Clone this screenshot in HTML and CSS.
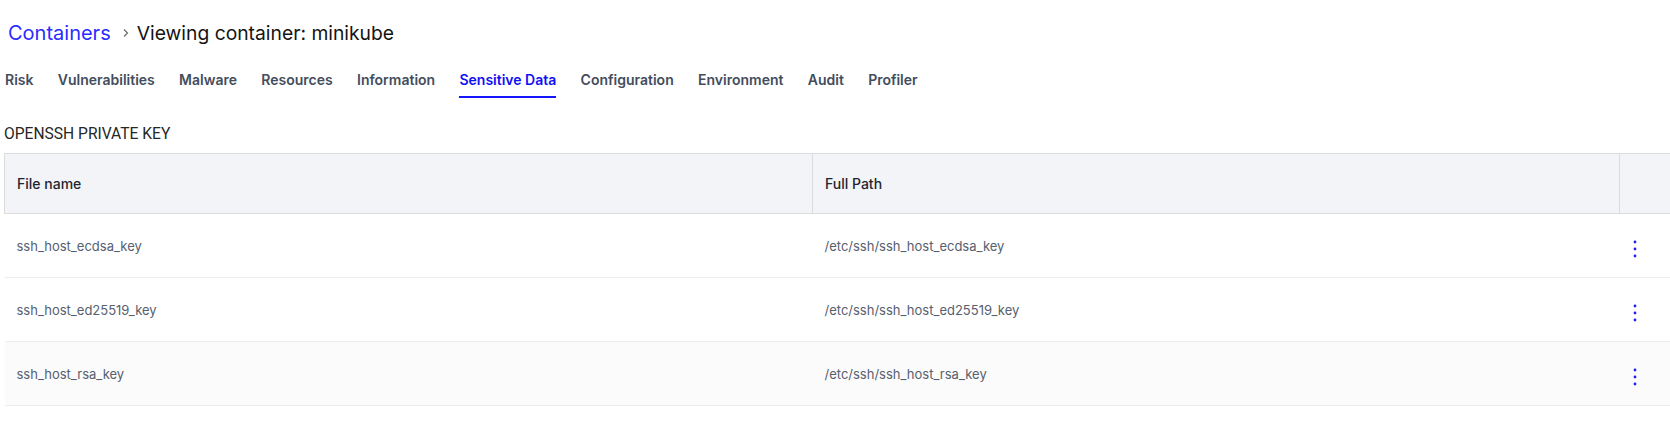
FILE: index.html
```html
<!DOCTYPE html>
<html>
<head>
<meta charset="utf-8">
<link rel="stylesheet" href="styles.css">
</head>
<body>
<div class="page">
  <div class="breadcrumb">
    <a class="crumb-link">Containers</a>
    <svg class="chev" width="8" height="10" viewBox="0 0 8 10"><path d="M2 1.5 L5.5 5 L2 8.5" fill="none" stroke="#6b6b6b" stroke-width="1.2"/></svg>
    <span class="crumb-current">Viewing container: minikube</span>
  </div>
  <nav class="tabs">
    <span class="tab">Risk</span>
    <span class="tab">Vulnerabilities</span>
    <span class="tab">Malware</span>
    <span class="tab">Resources</span>
    <span class="tab">Information</span>
    <span class="tab active">Sensitive Data</span>
    <span class="tab">Configuration</span>
    <span class="tab">Environment</span>
    <span class="tab">Audit</span>
    <span class="tab">Profiler</span>
  </nav>
  <div class="section-title">OPENSSH PRIVATE KEY</div>
  <div class="table-wrap">
    <table class="grid">
      <colgroup>
        <col class="c1"><col class="c2"><col class="c3">
      </colgroup>
      <thead>
        <tr><th>File name</th><th>Full Path</th><th></th></tr>
      </thead>
      <tbody>
        <tr>
          <td>ssh_host_ecdsa_key</td><td>/etc/ssh/ssh_host_ecdsa_key</td>
          <td class="act"><svg width="4" height="18" viewBox="0 0 4 18"><circle cx="2" cy="2" r="1.4" fill="#1f1fff"/><circle cx="2" cy="9" r="1.4" fill="#1f1fff"/><circle cx="2" cy="16" r="1.4" fill="#1f1fff"/></svg></td>
        </tr>
        <tr>
          <td>ssh_host_ed25519_key</td><td>/etc/ssh/ssh_host_ed25519_key</td>
          <td class="act"><svg width="4" height="18" viewBox="0 0 4 18"><circle cx="2" cy="2" r="1.4" fill="#1f1fff"/><circle cx="2" cy="9" r="1.4" fill="#1f1fff"/><circle cx="2" cy="16" r="1.4" fill="#1f1fff"/></svg></td>
        </tr>
        <tr class="shade">
          <td>ssh_host_rsa_key</td><td>/etc/ssh/ssh_host_rsa_key</td>
          <td class="act"><svg width="4" height="18" viewBox="0 0 4 18"><circle cx="2" cy="2" r="1.4" fill="#1f1fff"/><circle cx="2" cy="9" r="1.4" fill="#1f1fff"/><circle cx="2" cy="16" r="1.4" fill="#1f1fff"/></svg></td>
        </tr>
      </tbody>
    </table>
  </div>
</div>
</body>
</html>
```
FILE: styles.css
```css
html, body {
  margin: 0;
  padding: 0;
  background: #ffffff;
  overflow: hidden;
}
.page {
  font-family: Inter, "Noto Sans", sans-serif;
  padding: 19px 0 0 4px;
  width: 1666px;
  overflow: hidden;
}
.breadcrumb {
  display: flex;
  align-items: center;
  height: 28px;
  line-height: 28px;
  font-size: 20px;
  padding-left: 4px;
}
.crumb-link {
  color: #2b2bff;
}
.chev {
  margin: 0 7px 0 11px;
}
.crumb-current {
  color: #141414;
  font-size: 19.3px;
}
.tabs {
  display: flex;
  gap: 24.3px;
  margin-top: 23px;
  padding-left: 1px;
}
.tab {
  font-size: 14px;
  line-height: 20px;
  font-weight: 600;
  color: #434d5c;
  padding-bottom: 6px;
  border-bottom: 2px solid transparent;
}
.tab.active {
  color: #1010f5;
  border-bottom-color: #1515ff;
}
.section-title {
  font-family: Roboto, "Liberation Sans", sans-serif;
  font-size: 15.6px;
  line-height: 20px;
  color: #262626;
  margin-top: 26px;
}
.table-wrap {
  margin-top: 9px;
  width: 1700px;
}
.grid {
  border-collapse: collapse;
  table-layout: fixed;
  width: 1690px;
}
.c1 { width: 808px; }
.c2 { width: 807px; }
.c3 { width: 75px; }
.grid th {
  height: 59px;
  background: #f3f4f7;
  border: 1px solid #dcdcdf;
  text-align: left;
  padding: 0 12px;
  font-size: 14px;
  font-weight: 500;
  color: #1e2530;
}
.grid td {
  height: 63px;
  border-bottom: 1px solid #ececec;
  padding: 0 12px;
  font-size: 13px;
  color: #56606e;
  white-space: nowrap;
  vertical-align: middle;
}
.grid tr.shade td {
  background: #fbfbfb;
}
.grid td.act {
  padding: 0 0 0 13px;
}
.grid td.act svg {
  display: block;
  margin-top: 7px;
}
```
